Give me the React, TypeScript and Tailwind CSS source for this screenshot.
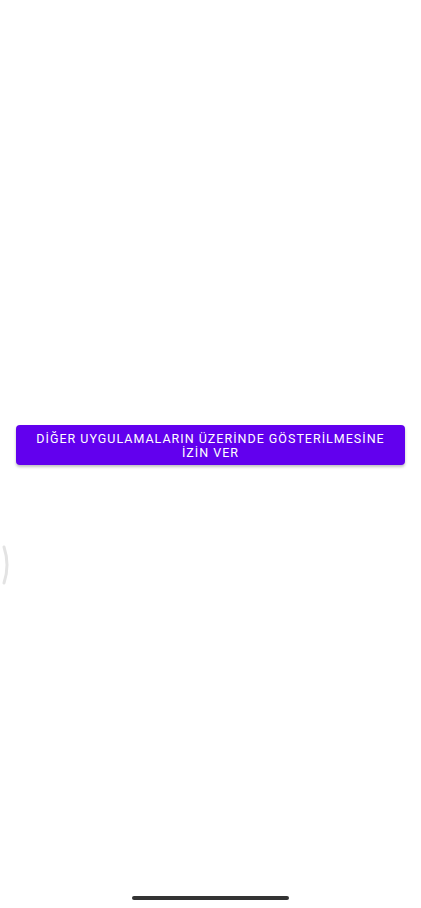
import React from "react";

export default function App() {
  return (
    <div className="relative w-[421px] h-[908px] bg-white overflow-hidden" style={{ fontFamily: "Roboto, 'Noto Sans', sans-serif" }}>
      <div className="pt-[425px] px-4">
        <button className="w-full h-[40px] rounded-[4px] bg-[#6200EE] text-white text-[12.5px] font-normal tracking-[1px] leading-[14px] uppercase shadow-[0_2px_3px_rgba(0,0,0,0.25)] flex items-center justify-center text-center px-4 pt-[1px]">
          DİĞER UYGULAMALARIN ÜZERİNDE GÖSTERİLMESİNE<br />İZİN VER
        </button>
      </div>
      <svg className="absolute left-0 top-[540px]" width="20" height="50" viewBox="0 0 20 50">
        <path d="M4 7 Q10 25 4 43" fill="none" stroke="#e3e3e3" strokeWidth="3" strokeLinecap="round" />
      </svg>
      <div className="absolute left-[132px] top-[896px] w-[157px] h-[4px] rounded-full bg-[#333333]" />
    </div>
  );
}
